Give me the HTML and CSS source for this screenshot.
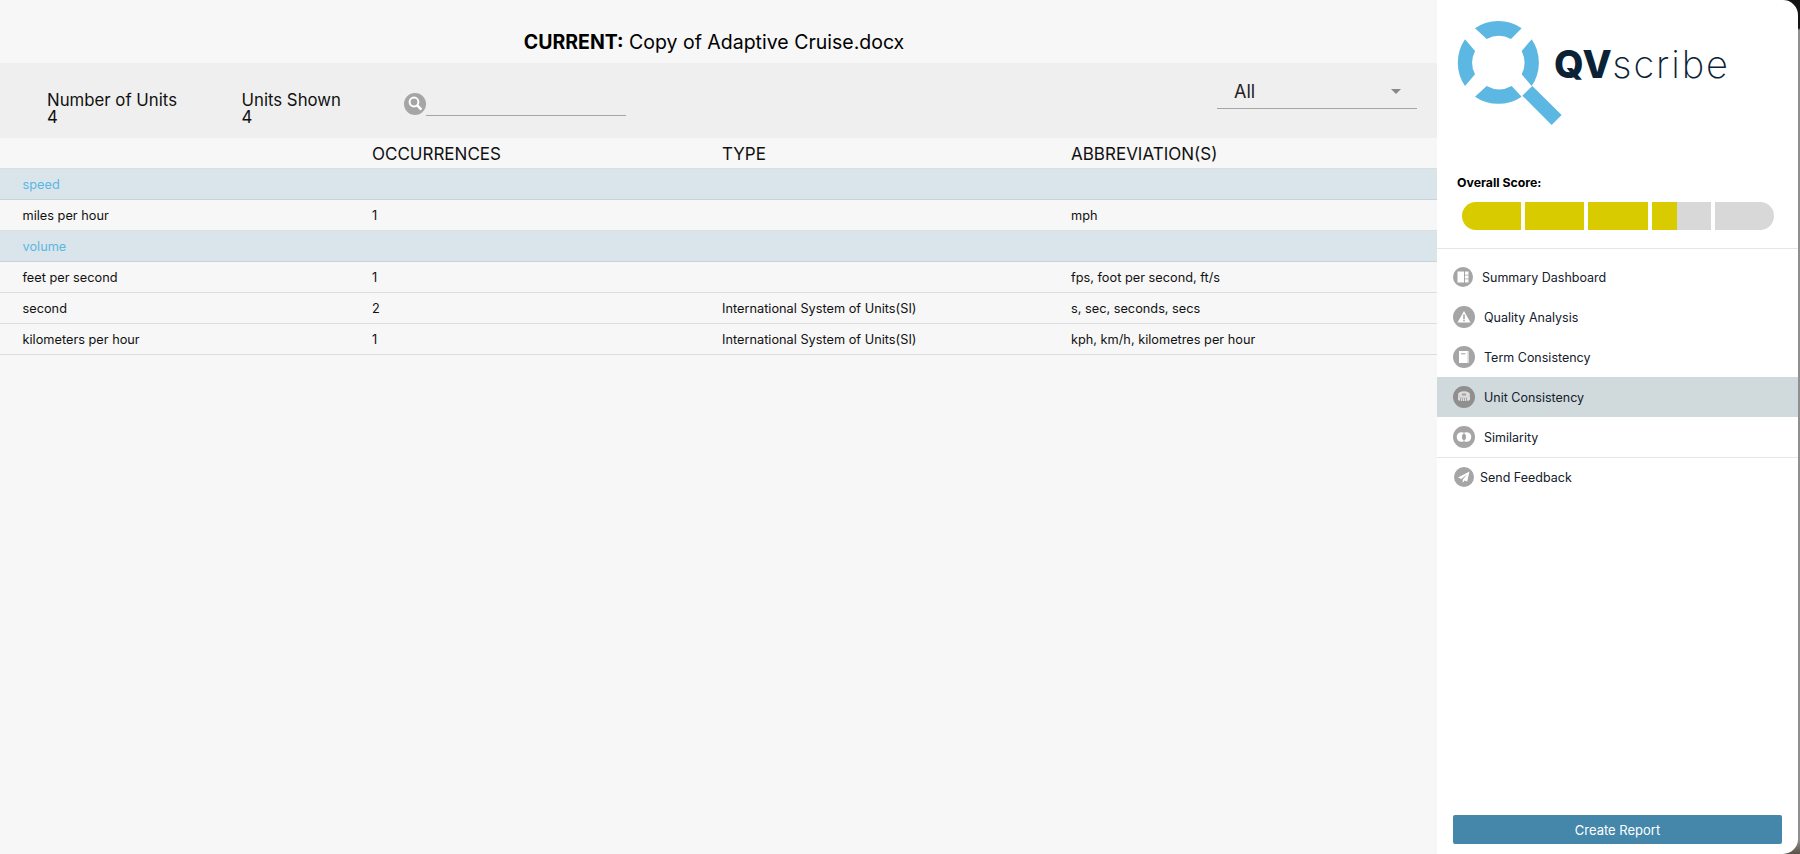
FILE: index.html
```html
<!DOCTYPE html>
<html lang="en">
<head>
<meta charset="utf-8">
<title>QVscribe</title>
<link rel="stylesheet" href="styles.css">
</head>
<body>
<div class="app">
  <main class="main">
    <h1 class="title"><b>CURRENT:</b> Copy of Adaptive Cruise.docx</h1>
    <section class="toolbar">
      <div class="stat stat-a"><div>Number of Units</div><div>4</div></div>
      <div class="stat stat-b"><div>Units Shown</div><div>4</div></div>
      <div class="search">
        <svg class="search-ico" viewBox="0 0 22 22"><circle cx="11" cy="11" r="11" fill="#a5a5a5"/><circle cx="10" cy="9" r="4.4" fill="none" stroke="#fff" stroke-width="2"/><path d="M13 12.2l4.400 4.400" stroke="#fff" stroke-width="2.6"/></svg>
        <div class="search-line"></div>
      </div>
      <div class="select"><span>All</span><i class="caret"></i></div>
    </section>
    <div class="row head"><div>&nbsp;</div><div>OCCURRENCES</div><div>TYPE</div><div>ABBREVIATION(S)</div></div>
    <div class="row group"><div>speed</div></div>
    <div class="row"><div>miles per hour</div><div>1</div><div></div><div>mph</div></div>
    <div class="row group"><div>volume</div></div>
    <div class="row"><div>feet per second</div><div>1</div><div></div><div>fps, foot per second, ft/s</div></div>
    <div class="row"><div>second</div><div>2</div><div>International System of Units(SI)</div><div>s, sec, seconds, secs</div></div>
    <div class="row"><div>kilometers per hour</div><div>1</div><div>International System of Units(SI)</div><div>kph, km/h, kilometres per hour</div></div>
  </main>
  <aside class="side">
    <div class="logo">
      <svg class="logo-mark" viewBox="81 63 315 313">
        <g fill="#5cb7e3">
          <path d="M135 85A124 124 0 0 1 275 85L243 117A78 78 0 0 0 170 117Z"/>
          <path d="M105 118A124 124 0 0 0 105 258L135 223A78 78 0 0 1 135 153Z"/>
          <path d="M305 118A124 124 0 0 1 305 258L275 223A78 78 0 0 0 275 153Z"/>
          <path d="M135 290A124 124 0 0 0 275 290L245 258A78 78 0 0 1 170 258Z"/>
          <path d="M277 287L307 258L395 345L365 375Z"/>
        </g>
      </svg>
      <div class="logo-text"><b>QV</b>scribe</div>
    </div>
    <div class="score-label">Overall Score:</div>
    <div class="score">
      <div class="seg seg-first"><i class="fill full"></i></div>
      <div class="seg"><i class="fill full"></i></div>
      <div class="seg"><i class="fill full"></i></div>
      <div class="seg"><i class="fill part"></i></div>
      <div class="seg seg-last"></div>
    </div>
    <nav class="nav">
      <a class="item"><svg class="ico" viewBox="0 0 20 20"><circle cx="10" cy="10" r="10" fill="#a5a5a5"/><path d="M4.500 4.500h6.500v11H4.500zM12 4.500h3.500v3.200H12zM12 8.500h3.500v3H12zM12 12.300h3.500v3.200H12z" fill="#fff"/></svg><span>Summary Dashboard</span></a>
      <a class="item"><svg class="ico big" viewBox="0 0 22 22"><circle cx="11" cy="11" r="11" fill="#a5a5a5"/><path d="M11 5l6.500 11.500h-13z" fill="#fff"/><path d="M10.200 8.500h1.600v4.400h-1.600zM10.200 13.700h1.600v1.500h-1.600z" fill="#a5a5a5"/></svg><span>Quality Analysis</span></a>
      <a class="item"><svg class="ico big" viewBox="0 0 22 22"><circle cx="11" cy="11" r="11" fill="#a5a5a5"/><path d="M6 5h9.500v12H6z" fill="#fff"/><path d="M8 7h4.500v1.400H8z" fill="#bbb"/><path d="M14.300 5h1.200v12h-1.200z" fill="#ddd"/></svg><span>Term Consistency</span></a>
      <a class="item active"><svg class="ico big" viewBox="0 0 22 22"><circle cx="11" cy="11" r="11" fill="#8f8f8f"/><ellipse cx="11" cy="8.500" rx="6" ry="3.200" fill="#dedede"/><ellipse cx="11" cy="8.500" rx="2.500" ry="1.200" fill="#a8a8a8"/><path d="M5 9v4.500c0 2 12 2 12 0V9c-1 3.500-11 3.500-12 0z" fill="#dedede"/><path d="M7.500 11.500v3.500M9.500 12v3.500M11.500 12v3.500M13.500 12v3.500" stroke="#8f8f8f" stroke-width=".7"/></svg><span>Unit Consistency</span></a>
      <a class="item"><svg class="ico big" viewBox="0 0 22 22"><circle cx="11" cy="11" r="11" fill="#a5a5a5"/><circle cx="8.500" cy="11" r="4.800" fill="#fff"/><circle cx="13.500" cy="11" r="4.800" fill="#fff"/><path d="M11 7a4.800 4.800 0 0 1 0 8a4.800 4.800 0 0 1 0-8z" fill="#a5a5a5"/></svg><span>Similarity</span></a>
    </nav>
    <a class="item feedback"><svg class="ico" viewBox="0 0 20 20"><circle cx="10" cy="10" r="10" fill="#a5a5a5"/><path d="M15.500 4.500L4 10.500l3.300 1.400L13 7.500l-4.300 5.200v3l2-2.200 2.500 1z" fill="#fff"/></svg><span>Send Feedback</span></a>
    <button class="report">Create Report</button>
  </aside>
</div>
</body>
</html>
```
FILE: styles.css
```css
* { box-sizing: border-box; }
html, body { margin: 0; height: 100%; }
body { background: linear-gradient(#141414 0, #141414 28px, #8f8f8f 30px, #8f8f8f 840px, #5a5148 854px); font-family: Inter, "Liberation Sans", sans-serif; color: #111; overflow: hidden; }
.app { display: flex; height: 854px; width: 1798px; }
.main { width: 1437px; background: #f7f7f7; }
.title { margin: 0; height: 63px; padding: 31px 9px 0 0; font-size: 19.500px; line-height: 22px; font-weight: 400; text-align: center; color: #000; }
.title b { font-weight: 700; }
.toolbar { display: flex; align-items: flex-start; height: 75px; background: #efefef; padding-left: 47px; position: relative; font-size: 16.800px; line-height: 17px; }
.stat { margin-top: 29px; color: #111; }
.stat-a { width: 194.500px; }
.stat-b { width: 162.500px; }
.search { display: flex; align-items: flex-end; margin-top: 30px; }
.search-ico { width: 22px; height: 22px; display: block; }
.search-line { width: 200px; height: 1px; background: #a5a5a5; margin-bottom: -1px; }
.select { position: absolute; right: 20px; top: 17px; width: 200px; height: 29px; border-bottom: 1px solid #a5a5a5; padding-left: 17px; display: flex; justify-content: space-between; color: #222; font-size: 18px; line-height: 24px; }
.caret { width: 0; height: 0; border: 5.500px solid transparent; border-top: 5.500px solid #888; border-bottom: 0; margin: 9px 16px 0 0; }
.row { display: grid; grid-template-columns: 349.500px 350px 349px 1fr; padding-left: 22.500px; height: 31px; align-items: center; font-size: 12.750px; border-bottom: 1px solid #dddddd; color: #111; }
.head { font-size: 17px; color: #111; padding-top: 2px; }
.group { background: #d9e5eb; color: #5cb7e3; border-bottom-color: #c6d4dc; }
.side { flex: 1; background: #fff; border-radius: 0 15px 15px 0; display: flex; flex-direction: column; position: relative; }
.logo { height: 175px; position: relative; }
.logo-mark { position: absolute; left: 20px; top: 21px; width: 105px; height: 104.300px; }
.logo-text { position: absolute; left: 117px; top: 41px; font-size: 38px; line-height: 46px; color: #0b2236; letter-spacing: 1.900px; font-weight: 200; }
.logo-text b { font-weight: 800; letter-spacing: .5px; }
.score-label { padding-left: 20px; font-size: 12.300px; font-weight: 700; color: #000; line-height: 16px; height: 27px; }
.score { display: flex; gap: 4px; margin-left: 25px; width: 312px; height: 28px; flex: none; }
.seg { flex: 1; background: #d8d8d8; overflow: hidden; }
.seg-first { border-radius: 14px 0 0 14px; }
.seg-last { border-radius: 0 14px 14px 0; }
.fill { display: block; height: 100%; background: #d8cb00; }
.full { width: 100%; }
.part { width: 43%; }
.nav { margin-top: 18px; border-top: 1px solid #e6e6e6; border-bottom: 1px solid #e6e6e6; padding: 8px 0 0; }
.item { display: flex; align-items: center; height: 40px; padding-left: 16px; font-size: 12.500px; color: #14202c; }
.active { background: #d0d9dc; }
.ico { width: 20px; height: 20px; margin-right: 9px; flex: none; display: block; }
.ico.big { width: 22px; height: 22px; }
.feedback { margin-top: -1px; padding-left: 17px; }
.feedback .ico { margin-right: 6px; }
.report { position: absolute; left: 16px; bottom: 10px; width: 329px; height: 29px; background: #4487aa; border: 0; border-radius: 2px; color: #fff; font: 13px Inter, "Liberation Sans", sans-serif; }
```
